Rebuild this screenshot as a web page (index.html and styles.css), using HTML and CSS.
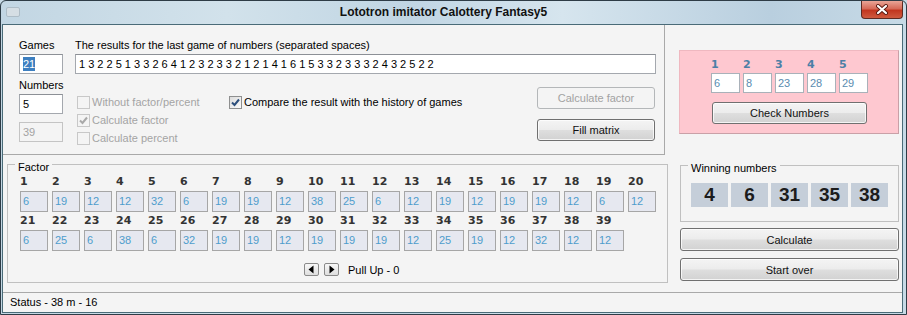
FILE: index.html
```html
<!DOCTYPE html>
<html>
<head>
<meta charset="utf-8">
<title>Lototron imitator Calottery Fantasy5</title>
<link rel="stylesheet" href="styles.css">
</head>
<body>
<div class="window">
  <div class="titlebar">
    <span class="app-icon"></span>
    <span class="title">Lototron imitator Calottery Fantasy5</span>
    <span class="close"><svg width="14" height="11" viewBox="0 0 14 11"><path d="M3 2 L11 9 M11 2 L3 9" stroke="#5a1a12" stroke-width="4" stroke-linecap="round"/><path d="M3 2 L11 9 M11 2 L3 9" stroke="#ffffff" stroke-width="2.2" stroke-linecap="round"/></svg></span>
  </div>
  <div class="client">
    <div class="main">
      <div class="left">
        <div class="top-panel">
          <div class="col-a">
            <div class="lbl">Games</div>
            <div class="field"><span class="sel">21</span></div>
            <div class="lbl lbl-numbers">Numbers</div>
            <div class="field">5</div>
            <div class="field disabled max">39</div>
          </div>
          <div class="col-b">
            <div class="lbl">The results for the last game of numbers (separated spaces)</div>
            <div class="field wide">1 3 2 2 5 1 3 3 2 6 4 1 2 3 2 3 3 2 1 2 1 4 1 6 1 5 3 3 2 3 3 3 2 4 3 2 5 2 2</div>
            <div class="options">
              <div class="checks">
                <div class="check disabled"><span class="cb"></span>Without factor/percent</div>
                <div class="check disabled"><span class="cb"><svg width="11" height="11" viewBox="0 0 11 11"><path d="M2 5.5 L4.5 8 L9 2.5" fill="none" stroke="#a9a9a9" stroke-width="2"/></svg></span>Calculate factor</div>
                <div class="check disabled"><span class="cb"></span>Calculate percent</div>
              </div>
              <div class="check compare"><span class="cb"><svg width="11" height="11" viewBox="0 0 11 11"><path d="M2 5.5 L4.5 8 L9 2.5" fill="none" stroke="#2d4f7c" stroke-width="2"/></svg></span>Compare the result with the history of games</div>
              <div class="actions">
                <button class="btn" disabled>Calculate factor</button>
                <button class="btn">Fill matrix</button>
              </div>
            </div>
          </div>
        </div>
        <fieldset class="group factor">
          <legend>Factor</legend>
          <div class="factor-grid">
            <div class="cell"><div class="num">1</div><div class="val">6</div></div>
            <div class="cell"><div class="num">2</div><div class="val">19</div></div>
            <div class="cell"><div class="num">3</div><div class="val">12</div></div>
            <div class="cell"><div class="num">4</div><div class="val">12</div></div>
            <div class="cell"><div class="num">5</div><div class="val">32</div></div>
            <div class="cell"><div class="num">6</div><div class="val">6</div></div>
            <div class="cell"><div class="num">7</div><div class="val">19</div></div>
            <div class="cell"><div class="num">8</div><div class="val">19</div></div>
            <div class="cell"><div class="num">9</div><div class="val">12</div></div>
            <div class="cell"><div class="num">10</div><div class="val">38</div></div>
            <div class="cell"><div class="num">11</div><div class="val">25</div></div>
            <div class="cell"><div class="num">12</div><div class="val">6</div></div>
            <div class="cell"><div class="num">13</div><div class="val">12</div></div>
            <div class="cell"><div class="num">14</div><div class="val">19</div></div>
            <div class="cell"><div class="num">15</div><div class="val">12</div></div>
            <div class="cell"><div class="num">16</div><div class="val">19</div></div>
            <div class="cell"><div class="num">17</div><div class="val">19</div></div>
            <div class="cell"><div class="num">18</div><div class="val">12</div></div>
            <div class="cell"><div class="num">19</div><div class="val">6</div></div>
            <div class="cell"><div class="num">20</div><div class="val">12</div></div>
            <div class="cell"><div class="num">21</div><div class="val">6</div></div>
            <div class="cell"><div class="num">22</div><div class="val">25</div></div>
            <div class="cell"><div class="num">23</div><div class="val">6</div></div>
            <div class="cell"><div class="num">24</div><div class="val">38</div></div>
            <div class="cell"><div class="num">25</div><div class="val">6</div></div>
            <div class="cell"><div class="num">26</div><div class="val">32</div></div>
            <div class="cell"><div class="num">27</div><div class="val">19</div></div>
            <div class="cell"><div class="num">28</div><div class="val">19</div></div>
            <div class="cell"><div class="num">29</div><div class="val">12</div></div>
            <div class="cell"><div class="num">30</div><div class="val">19</div></div>
            <div class="cell"><div class="num">31</div><div class="val">19</div></div>
            <div class="cell"><div class="num">32</div><div class="val">19</div></div>
            <div class="cell"><div class="num">33</div><div class="val">12</div></div>
            <div class="cell"><div class="num">34</div><div class="val">25</div></div>
            <div class="cell"><div class="num">35</div><div class="val">19</div></div>
            <div class="cell"><div class="num">36</div><div class="val">12</div></div>
            <div class="cell"><div class="num">37</div><div class="val">32</div></div>
            <div class="cell"><div class="num">38</div><div class="val">12</div></div>
            <div class="cell"><div class="num">39</div><div class="val">12</div></div>
          </div>
          <div class="pull">
            <span class="arrow"><svg width="9" height="9" viewBox="0 0 9 9"><path d="M6.5 0.5 L1.5 4.5 L6.5 8.5 Z" fill="#000"/></svg></span>
            <span class="arrow"><svg width="9" height="9" viewBox="0 0 9 9"><path d="M2.5 0.5 L7.5 4.5 L2.5 8.5 Z" fill="#000"/></svg></span>
            <span class="pull-text">Pull Up - 0</span>
          </div>
        </fieldset>
      </div>
      <div class="right">
        <div class="pink">
          <div class="check-grid">
            <div class="cell"><div class="num blue">1</div><div class="inbox">6</div></div>
            <div class="cell"><div class="num blue">2</div><div class="inbox">8</div></div>
            <div class="cell"><div class="num blue">3</div><div class="inbox">23</div></div>
            <div class="cell"><div class="num blue">4</div><div class="inbox">28</div></div>
            <div class="cell"><div class="num blue">5</div><div class="inbox">29</div></div>
          </div>
          <button class="btn check-btn">Check Numbers</button>
        </div>
        <fieldset class="group winning">
          <legend>Winning numbers</legend>
          <div class="win-row">
            <div class="win">4</div>
            <div class="win">6</div>
            <div class="win">31</div>
            <div class="win">35</div>
            <div class="win">38</div>
          </div>
        </fieldset>
        <button class="btn wide-btn calc">Calculate</button>
        <button class="btn wide-btn over">Start over</button>
      </div>
    </div>
    <div class="status">Status - 38 m - 16</div>
  </div>
</div>
</body>
</html>
```
FILE: styles.css
```css
* { box-sizing: border-box; }
html, body { margin: 0; padding: 0; }
body {
  width: 907px;
  height: 315px;
  overflow: hidden;
  background: #c6d9e5;
  font-family: "Liberation Sans", Arial, sans-serif;
  font-size: 11px;
  color: #000;
}
.window {
  width: 907px;
  height: 315px;
  display: flex;
  flex-direction: column;
  border: 1px solid #2e3c46;
  border-radius: 6px 6px 0 0;
  background: linear-gradient(90deg, #c2d6e3 0%, #d2e2eb 25%, #c0d5e3 45%, #d6e5ee 62%, #b9cfdf 85%, #c7dae6 100%);
  overflow: hidden;
}
.titlebar {
  height: 23px;
  flex: none;
  display: flex;
  align-items: flex-start;
}
.app-icon {
  width: 14px;
  height: 10px;
  margin: 6px 0 0 5px;
  border: 1px solid #aebdc7;
  border-radius: 2px;
  background: #d5dee4;
}
.title {
  flex: 1;
  text-align: center;
  font-weight: bold;
  font-size: 12px;
  line-height: 23px;
  color: #111;
  padding-left: 6px;
}
.close {
  width: 42px;
  height: 18px;
  margin-right: 3px;
  border: 1px solid #5e2a22;
  border-top: none;
  border-radius: 0 0 4px 4px;
  background: linear-gradient(#e9a597 0%, #d66a58 45%, #c2361f 55%, #cf5a3f 100%);
  display: flex;
  align-items: center;
  justify-content: center;
}
.client {
  flex: 1;
  margin: 0 3px 1px 1px;
  border: 1px solid #4a6b78;
  background: #f4f4f4;
  display: flex;
  flex-direction: column;
}
.main {
  height: 267px;
  display: flex;
}
.left {
  width: 665px;
  flex: none;
}
.top-panel {
  width: 662px;
  height: 130px;
  border-right: 1px solid #a9a9a9;
  border-bottom: 1px solid #a9a9a9;
  display: flex;
  padding: 14px 0 0 16px;
}
.col-a {
  width: 44px;
  display: flex;
  flex-direction: column;
}
.col-b {
  width: 581px;
  margin-left: 12px;
  display: flex;
  flex-direction: column;
}
.lbl {
  height: 15px;
  line-height: 13px;
  white-space: nowrap;
}
.lbl-numbers {
  height: 20px;
  padding-top: 5px;
}
.field {
  height: 20px;
  border: 1px solid #a4a8ae;
  border-top-color: #8c9096;
  background: #fff;
  line-height: 18px;
  padding-left: 3px;
  white-space: nowrap;
}
.field.max { margin-top: 8px; }
.field.disabled {
  background: #f4f4f4;
  border-color: #c4c4c4;
  color: #a3a3a3;
}
.sel {
  background: #3d7fc0;
  color: #fff;
  padding: 1px 0;
}
.options {
  display: flex;
  align-items: flex-start;
}
.checks {
  width: 152px;
  margin: 19px 0 0 2px;
  display: flex;
  flex-direction: column;
}
.check {
  height: 18px;
  display: flex;
  align-items: center;
  white-space: nowrap;
}
.check.disabled { color: #a4a4a4; }
.compare { margin-top: 19px; }
.cb {
  width: 13px;
  height: 13px;
  margin-right: 2px;
  border: 1px solid #8e8f8f;
  background: linear-gradient(135deg, #dcdcdc, #fbfbfb);
  display: flex;
  align-items: center;
  justify-content: center;
}
.check.disabled .cb {
  border-color: #c8c8c8;
  background: #f4f4f4;
}
.actions {
  margin: 13px 1px 0 auto;
  display: flex;
  flex-direction: column;
  gap: 10px;
}
.btn {
  font-family: "Liberation Sans", Arial, sans-serif;
  font-size: 11px;
  font-weight: normal;
  color: #111;
  height: 22px;
  padding: 0;
  border: 1px solid #707070;
  border-radius: 3px;
  background: linear-gradient(#f4f4f4 0%, #ececec 48%, #dedede 52%, #d2d2d2 100%);
  box-shadow: inset 0 0 0 1px rgba(255, 255, 255, 0.75);
}
.actions .btn { width: 118px; }
.btn:disabled {
  color: #a2a2a2;
  border-color: #b4b7b9;
  background: #f4f4f4;
  box-shadow: none;
}
.group {
  margin: 0;
  padding: 0;
  border: 1px solid #c0c0c0;
  border-radius: 0;
}
.group legend {
  padding: 0 3px;
  height: 13px;
  line-height: 18px;
  font-size: 11px;
}
.factor {
  margin: 3px 0 0 4px;
  width: 661px;
  padding: 2px 7px 6px 7px;
}
.factor-grid {
  margin-left: 5px;
  display: grid;
  grid-template-columns: repeat(20, 28px);
  column-gap: 4px;
}
.num {
  height: 18px;
  line-height: 18px;
  font-family: "DejaVu Sans", sans-serif;
  font-weight: bold;
  font-size: 11px;
  color: #333;
}
.val {
  height: 21px;
  border: 1px solid #a6a6a6;
  background: #e6e8f0;
  color: #4f9dcc;
  line-height: 19px;
  padding-left: 2px;
}
.pull {
  margin: 12px 0 0 289px;
  height: 13px;
  display: flex;
  align-items: center;
}
.arrow {
  width: 15px;
  height: 13px;
  border: 1px solid #8a8a8a;
  border-radius: 2px;
  background: linear-gradient(#f8f8f8, #dedede);
  margin-right: 5px;
  display: flex;
  align-items: center;
  justify-content: center;
}
.pull-text { margin-left: 4px; }
.right {
  width: 234px;
  flex: none;
  display: flex;
  flex-direction: column;
}
.pink {
  width: 220px;
  height: 84px;
  margin: 25px 2px 0 11px;
  background: #fec8d0;
  border: 1px solid #efb8c0;
  border-right-color: #c9a0a7;
  border-bottom-color: #c9a0a7;
  padding: 6px 0 0 31px;
}
.check-grid {
  display: grid;
  grid-template-columns: repeat(5, 29px);
  column-gap: 3px;
}
.num.blue {
  height: 16px;
  line-height: 16px;
  color: #4c7fa6;
}
.inbox {
  height: 20px;
  border: 1px solid #a9b1b9;
  background: #fff;
  color: #5a8cb0;
  line-height: 18px;
  padding-left: 2px;
}
.check-btn {
  width: 155px;
  margin: 9px 0 0 1px;
}
.winning {
  width: 219px;
  margin: 25px 0 0 12px;
  padding: 11px 7px 14px 7px;
}
.win-row {
  margin-left: 3px;
  display: flex;
  gap: 3px;
}
.win {
  width: 37px;
  height: 24px;
  background: #c5ced9;
  text-align: center;
  font-weight: bold;
  font-size: 19px;
  line-height: 24px;
  color: #1c1c1c;
}
.wide-btn {
  width: 219px;
  height: 23px;
  margin-left: 12px;
}
.calc { margin-top: 6px; }
.over { margin-top: 7px; }
.status {
  height: 20px;
  border-top: 1px solid #a9a9a9;
  line-height: 19px;
  padding-left: 7px;
}
```
